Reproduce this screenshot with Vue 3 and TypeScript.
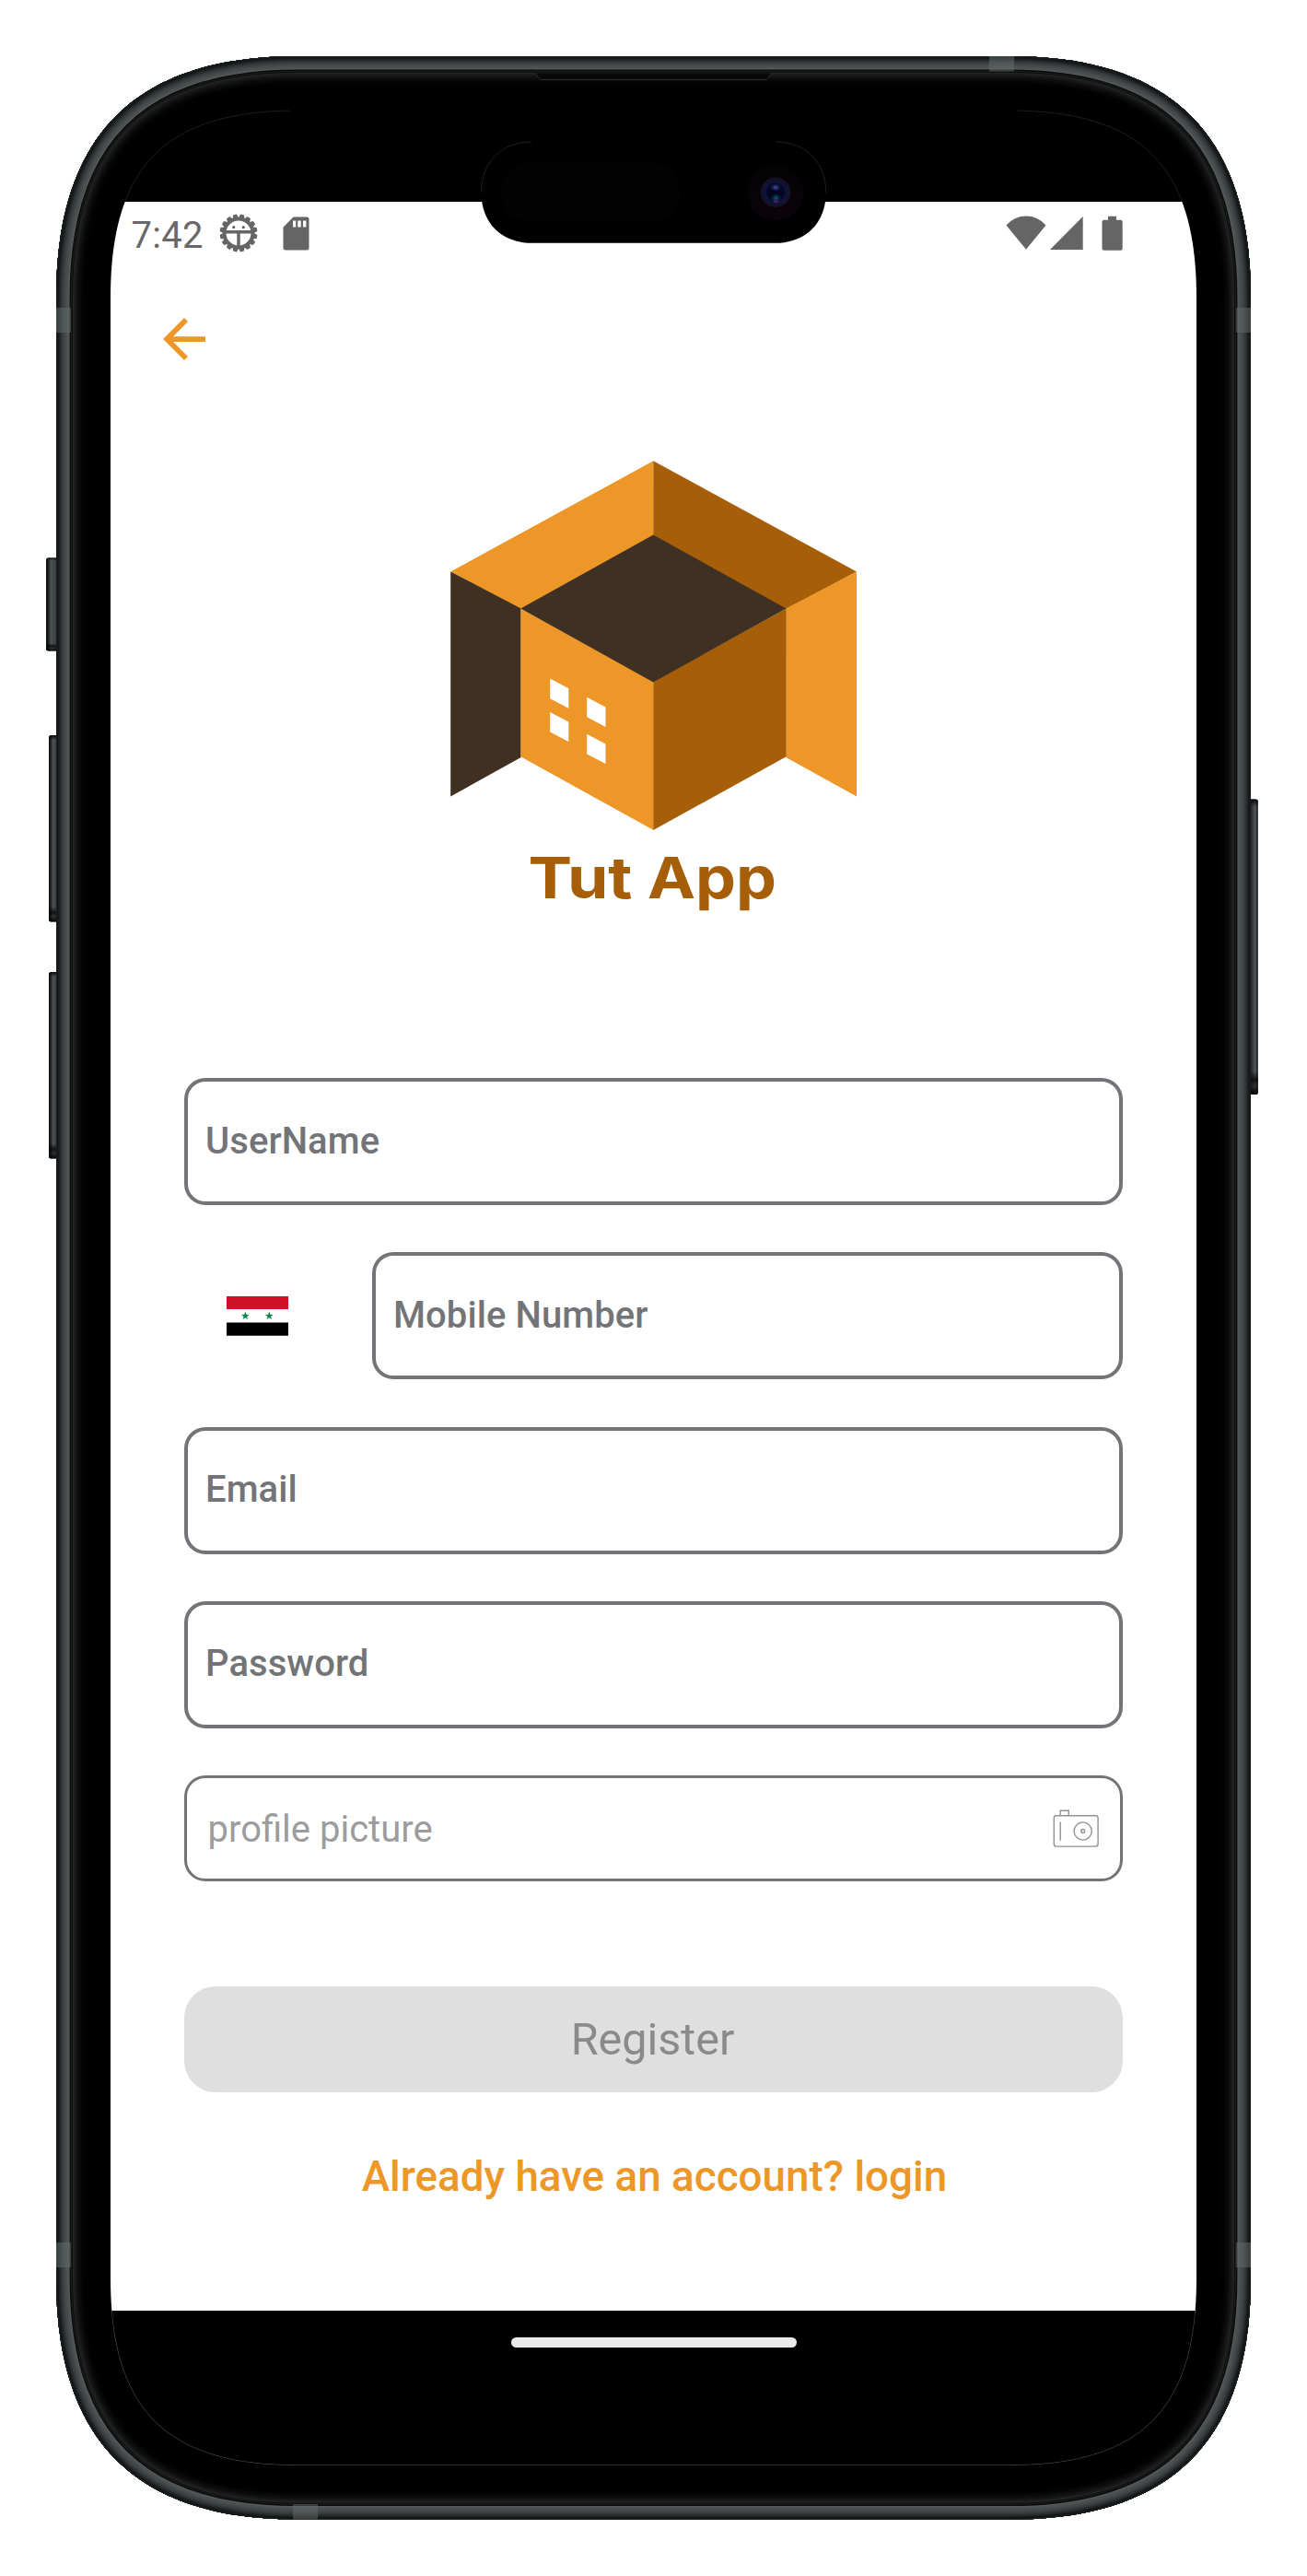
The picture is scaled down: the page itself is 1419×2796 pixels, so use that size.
<script setup lang="ts">
interface Field {
  id: string
  label: string
}

const accountFields: Field[] = [
  { id: 'email', label: 'Email' },
  { id: 'password', label: 'Password' },
]

// Continuous-curvature rounded rectangle used for the body and the display.
function squircle(l: number, t: number, r: number, b: number, e: number, a: number): string {
  return (
    `M${l} ${t + e}C${l} ${t + a} ${l + a} ${t} ${l + e} ${t}` +
    `H${r - e}C${r - a} ${t} ${r} ${t + a} ${r} ${t + e}` +
    `V${b - e}C${r} ${b - a} ${r - a} ${b} ${r - e} ${b}` +
    `H${l + e}C${l + a} ${b} ${l} ${b - a} ${l} ${b - e}Z`
  )
}

const body = squircle(61, 61, 1358, 2734.7, 262, 86)
const display = squircle(120, 120, 1299, 2675.7, 203, 60)
const island = squircle(522.5, 154, 896.7, 263.8, 54.9, 22)

// Distance from the outer edge and colour of each rim layer, innermost first.
const rim: [number, string][] = [
  [34, '#010101'], [31, '#020202'], [29, '#050505'], [27, '#090909'], [25, '#0e0e0e'],
  [23, '#151515'], [21, '#1d1d1d'], [19, '#252525'], [18, '#0c0d0d'], [17, '#1c1e1e'],
  [16, '#0a0b0b'], [14.6, '#545859'], [13, '#4b5051'], [11, '#454a4b'], [9, '#3c4142'],
  [7, '#333839'], [5.5, '#292d2e'], [4, '#1e2122'], [2.5, '#131616'], [1, '#1b1e1e'],
]

const teeth: number[] = Array.from({ length: 16 }, (_, i) => i * 22.5 + 11.25)
const sideButtons = [
  { x: 50, y: 605.5, w: 12, h: 101 },
  { x: 53, y: 798, w: 9, h: 202.5 },
  { x: 53, y: 1055, w: 9, h: 202.5 },
]
</script>

<template>
  <main class="stage">
    <svg class="layer" width="1419" height="2796" viewBox="0 0 1419 2796" aria-hidden="true">
      <defs>
        <clipPath id="bodyClip"><path :d="body" /></clipPath>
        <linearGradient id="btnL" x1="0" x2="1" y1="0" y2="0">
          <stop offset="0" stop-color="#0b0d0d" /><stop offset=".14" stop-color="#1a1d1e" />
          <stop offset=".35" stop-color="#4b5153" /><stop offset=".7" stop-color="#363c3e" />
          <stop offset="1" stop-color="#121415" />
        </linearGradient>
        <linearGradient id="btnR" x1="0" x2="1" y1="0" y2="0">
          <stop offset="0" stop-color="#141617" /><stop offset=".4" stop-color="#35393b" />
          <stop offset=".7" stop-color="#55585b" /><stop offset="1" stop-color="#0b0d0d" />
        </linearGradient>
        <linearGradient id="btnV" x1="0" x2="0" y1="0" y2="1">
          <stop offset="0" stop-color="#000" stop-opacity=".9" />
          <stop offset=".025" stop-color="#000" stop-opacity="0" />
          <stop offset=".92" stop-color="#000" stop-opacity="0" />
          <stop offset=".95" stop-color="#000" stop-opacity=".75" />
          <stop offset=".97" stop-color="#000" stop-opacity=".35" />
          <stop offset="1" stop-color="#000" stop-opacity=".95" />
        </linearGradient>
      </defs>
      <g v-for="b in sideButtons" :key="b.y">
        <rect :x="b.x" :y="b.y" :width="b.w + 4" :height="b.h" rx="2.5" fill="url(#btnL)" />
        <rect :x="b.x" :y="b.y" :width="b.w + 4" :height="b.h" rx="2.5" fill="url(#btnV)" />
      </g>
      <rect x="1356" y="867.5" width="9.8" height="320.5" rx="2.5" fill="url(#btnR)" />
      <rect x="1356" y="867.5" width="9.8" height="320.5" rx="2.5" fill="url(#btnV)" />
      <path :d="body" fill="#000" />
      <g clip-path="url(#bodyClip)">
        <path v-for="[d, c] in rim" :key="d" :d="body" fill="none" :stroke="c" :stroke-width="d * 2" />
        <g fill="#656b6b" fill-opacity=".5">
          <rect x="61" y="334" width="16" height="27" /><rect x="1342" y="334" width="16" height="27" />
          <rect x="61" y="2434" width="16" height="27" /><rect x="1342" y="2434" width="16" height="27" />
          <rect x="1074" y="61" width="27" height="16.5" /><rect x="318" y="2718" width="27" height="16.5" />
        </g>
      </g>
      <path d="M581 79.5H838C835 80 836 86.5 831 86.5H588C583 86.5 584 80 581 79.5Z" fill="#090909" />
      <path d="M581 79.5C584 80 583 86.5 588 86.5H831C836 86.5 835 80 838 79.5" fill="none" stroke="#2c2c2c" />
    </svg>

    <section class="screen" :style="{ clipPath: `path('${squircle(0, 0, 1179, 2555.7, 203, 60)}')` }">
      <header class="status">
        <span class="clock">7:42</span>
        <svg class="gear" width="42" height="42" viewBox="-21 -21 42 42">
          <g fill="#656565">
            <path v-for="a in teeth" :key="a" d="M-4 -14.5L-2 -20.4H2L4 -14.5Z" :transform="`rotate(${a})`" />
          </g>
          <circle r="15.2" fill="none" stroke="#656565" stroke-width="3.4" />
          <path d="M-15 -1.2H15M0 0V15" stroke="#656565" stroke-width="3.4" />
          <circle cx="-5.3" cy="-6.3" r="1.6" fill="#656565" /><circle cx="5.3" cy="-6.3" r="1.6" fill="#656565" />
        </svg>
        <svg class="sd" width="29" height="37" viewBox="0 0 29 37">
          <path fill-rule="evenodd" fill="#656565" d="M11.5 .5H26Q28.5 .5 28.5 3V34Q28.5 36.5 26 36.5H3Q.5 36.5 .5 34V11.5ZM11 4.5V11.5H14.2V4.5ZM16.3 4.5V11.5H19.7V4.5ZM22 4.5V11.5H25.4V4.5Z" />
        </svg>
        <svg class="signals" width="128" height="38" viewBox="0 0 128 38">
          <g fill="#656565">
            <path d="M.5 10.5Q9.5 .6 22 .6T43.5 10.5L22 36.8Z" />
            <path d="M83.7 1V37H48Z" />
            <path d="M111 .7H120V4.7H124.5Q126.7 4.7 126.7 7V35.5Q126.7 37.8 124.5 37.8H106.7Q104.5 37.8 104.5 35.5V7Q104.5 4.7 106.7 4.7H111Z" />
          </g>
        </svg>
      </header>

      <nav class="nav">
        <svg width="46" height="46" viewBox="4 4 16 16">
          <path fill="#ed9728" d="M20 11H7.83l5.59-5.59L12 4l-8 8 8 8 1.41-1.41L7.83 13H20z" />
        </svg>
      </nav>

      <svg class="logo" width="442" height="490" viewBox="489 499 442 490">
        <path fill="#ed9728" d="M709.3 500.3V581L565.5 661L489.2 620.5Z" />
        <path fill="#a65e08" d="M709.3 500.3L930 620.5L853.5 661L709.3 581Z" />
        <path fill="#403021" d="M489.2 620.5L565.7 660.4V822L489.2 864.5Z" />
        <path fill="#ed9728" d="M930 620.5L853.3 660.4V822L930 864.5Z" />
        <path fill="#ed9728" d="M565.3 660.4L709.5 740V901L565.3 821.3Z" />
        <path fill="#a65e08" d="M853.6 660.4L709.3 740V901L853.6 821.3Z" />
        <path fill="#403021" d="M709.3 580.5L853.6 660.4L709.3 740.5L565.3 660.4Z" />
        <path fill="#fff" d="M597.2 736.5L617.3 747.2V768.8L597.2 758.2ZM597.2 773L617.3 783.5V804.9L597.2 794.6ZM637.2 756.8L657.5 767.5V789L637.2 778.2ZM637.2 796.7L657.5 807.5V829L637.2 818.4Z" />
        <text class="brand" y="975.2"><tspan x="573.5" textLength="113" lengthAdjust="spacingAndGlyphs">Tut</tspan> <tspan x="703" textLength="140" lengthAdjust="spacingAndGlyphs">App</tspan></text>
      </svg>

      <form class="form" @submit.prevent>
        <div class="field"><span>UserName</span></div>
        <div class="row">
          <div class="country">
            <svg width="67" height="43" viewBox="0 0 67 43">
              <path fill="#ce1126" d="M0 0H67V14H0Z" /><path fill="#fff" d="M0 14H67V28.5H0Z" />
              <path fill="#000" d="M0 28.5H67V42.8H0Z" />
              <g fill="#0a8a4c">
                <path d="M20.3 16.6L21.4 19.8L24.6 19.9L22.1 21.9L23 25L20.3 23.2L17.6 25L18.5 21.9L16 19.9L19.2 19.8Z" />
                <path transform="translate(26)" d="M20.3 16.6L21.4 19.8L24.6 19.9L22.1 21.9L23 25L20.3 23.2L17.6 25L18.5 21.9L16 19.9L19.2 19.8Z" />
              </g>
            </svg>
          </div>
          <div class="field"><span>Mobile Number</span></div>
        </div>
        <div v-for="f in accountFields" :key="f.id" class="field"><span>{{ f.label }}</span></div>
        <div class="picture">
          <span>profile picture</span>
          <svg width="50" height="41" viewBox="1143.5 1963.5 50 41" fill="none" stroke="#929292" stroke-width="1.4">
            <rect x="1144.8" y="1970.2" width="47.8" height="33.4" rx="2.5" />
            <path d="M1151.6 1970V1964.7H1160.8V1970M1151.7 1977V1997.3" />
            <circle cx="1176.2" cy="1987" r="9.6" /><circle cx="1176.2" cy="1987" r="2" />
          </svg>
        </div>
        <button class="register" type="button" disabled>Register</button>
        <a class="login">Already have an account? login</a>
      </form>
      <footer class="system"><i class="home" /></footer>
    </section>

    <svg class="layer" width="1419" height="2796" viewBox="0 0 1419 2796" aria-hidden="true">
      <defs>
        <clipPath id="corners">
          <path d="M110 110H315V219H110ZM1104 110H1309V219H1104ZM110 2508H315V2690H110ZM1104 2508H1309V2690H1104Z" />
        </clipPath>
        <radialGradient id="lens"><stop offset="0" stop-color="#02031a" /><stop offset=".75" stop-color="#050724" /><stop offset="1" stop-color="#10164f" /></radialGradient>
        <linearGradient id="ring" x1="0" x2="0" y1="0" y2="1"><stop offset="0" stop-color="#030303" /><stop offset="1" stop-color="#0b030b" /></linearGradient>
        <radialGradient id="blue"><stop offset="0" stop-color="#4a55a8" /><stop offset="1" stop-color="#1a2060" stop-opacity="0" /></radialGradient>
        <radialGradient id="teal"><stop offset="0" stop-color="#14636c" /><stop offset="1" stop-color="#0b2b55" stop-opacity="0" /></radialGradient>
      </defs>
      <path :d="display" fill="none" stroke="#2b2b2b" stroke-width=".7" clip-path="url(#corners)" />
      <path :d="island" fill="#000" />
      <path d="M522.5 209C522.5 176 544.5 154 577 154M842 154C875 154 896.7 176 896.7 209" fill="none" stroke="#2a2a2a" stroke-width=".8" />
      <rect x="544" y="176" width="194" height="65.5" rx="32.7" fill="#030303" />
      <circle cx="842" cy="208.8" r="30.3" fill="url(#ring)" />
      <circle cx="842" cy="208.8" r="16.3" fill="#121327" />
      <circle cx="842" cy="208.8" r="12" fill="url(#lens)" />
      <ellipse cx="842" cy="203.5" rx="6.5" ry="4.5" fill="url(#blue)" />
      <ellipse cx="842.5" cy="215" rx="6" ry="5.5" fill="url(#teal)" />
      <ellipse cx="842.5" cy="218.8" rx="3" ry="1.4" fill="#4c1a70" />
    </svg>
  </main>
</template>

<style>
body {
  margin: 0;
  background: #fff;
}
</style>

<style scoped>
.stage {
  position: relative;
  display: flex;
  justify-content: center;
  box-sizing: border-box;
  width: 1419px;
  height: 2796px;
  padding-top: 120px;
  overflow: hidden;
  font-family: Roboto, "Liberation Sans", sans-serif;
}
.layer {
  position: absolute;
  inset: 0;
}
.screen {
  position: relative;
  display: flex;
  flex-direction: column;
  box-sizing: border-box;
  width: 1179px;
  height: 2556px;
  padding-top: 99px;
  background: linear-gradient(#000 99px, #fff 99px);
}
.status {
  display: flex;
  height: 68px;
  padding: 0 79.5px 0 22.5px;
  align-items: center;
  color: #686868;
}
.clock {
  padding-top: 5px;
  font-size: 40px;
  line-height: 48px;
  letter-spacing: 0.3px;
}
.gear {
  margin-left: 17px;
}
.sd {
  margin-left: 27px;
}
.signals {
  margin-left: auto;
}
.nav {
  display: flex;
  height: 46px;
  padding: 58px 57px 0;
}
.logo {
  align-self: center;
  margin-top: 108px;
}
.brand {
  font-family: Inter, "Liberation Sans", sans-serif;
  font-weight: 700;
  font-size: 62.5px;
  fill: #a65e08;
}
.form {
  display: flex;
  flex-direction: column;
  padding: 0 80px;
  margin-top: 181px;
}
.field,
.picture {
  display: flex;
  align-items: center;
  box-sizing: border-box;
  height: 138px;
  margin-bottom: 51.3px;
  padding: 0 19px 2px;
  border: 4px solid #737478;
  border-radius: 23px;
  color: #737478;
  font-size: 40px;
  font-weight: 500;
}
.field span {
  letter-spacing: 0.08px;
}
.row {
  display: flex;
}
.row .field {
  flex: 1;
}
.country {
  width: 158px;
  padding: 47.5px 0 0 46px;
}
.picture {
  justify-content: space-between;
  height: 115px;
  margin-bottom: 114px;
  padding: 0 23px 0 22.5px;
  border-width: 3px;
  color: #9c9c9c;
  font-weight: 400;
}
.picture span {
  padding-top: 2px;
}
.register {
  height: 115px;
  padding: 0 2px 0 0;
  border: 0;
  border-radius: 34px;
  background: #dfdfdf;
  color: #8a8a8a;
  font: 400 48.5px/115px Roboto, sans-serif;
}
.login {
  margin-top: 64px;
  padding-left: 2px;
  color: #ed9728;
  font-size: 45.8px;
  font-weight: 500;
  line-height: 56px;
  text-align: center;
}
.system {
  display: flex;
  justify-content: center;
  flex: 1;
  margin-top: 117px;
  background: #000;
}
.home {
  width: 310px;
  height: 11.5px;
  margin-top: 28.5px;
  border-radius: 6px;
  background: #ebebeb;
}
</style>
